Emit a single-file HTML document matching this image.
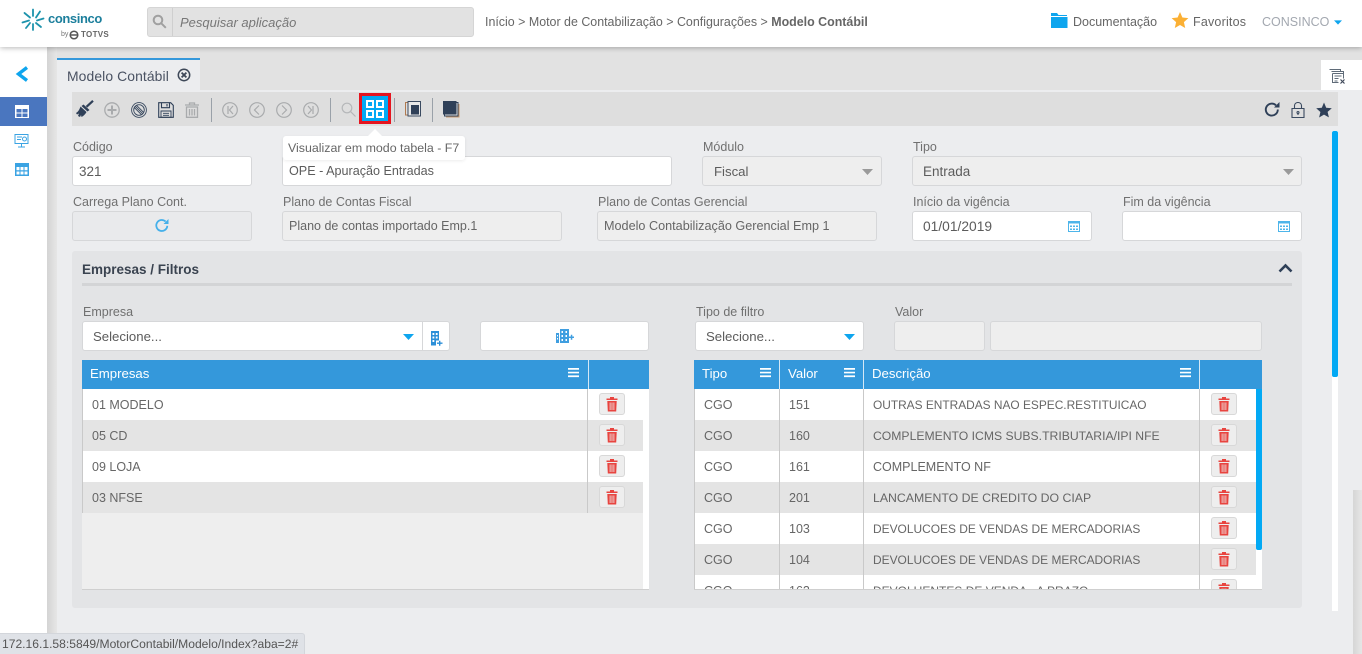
<!DOCTYPE html>
<html lang="pt"><head><meta charset="utf-8"><title>Modelo Contábil</title>
<style>
*{box-sizing:border-box}
html,body{margin:0;padding:0;width:1362px;height:654px;overflow:hidden;background:#ecedef;font-family:"Liberation Sans",sans-serif;color:#666;font-size:13px}
.a{position:absolute}
.t{position:absolute;white-space:nowrap;line-height:16px}
.lb{color:#707070;font-size:12.5px}
.in{position:absolute;height:30px;background:#fff;border:1px solid #d6d7d9;border-radius:3px;padding:0 0 0 6px;line-height:29px;font-size:13.2px;color:#5c5c5c;white-space:nowrap}
.dis{background:#eeeeee}
.h{position:absolute;background:#3498db;height:29px;top:360px}
.hd{color:#fff;font-size:13.2px}
.row{position:absolute;height:31px}
.g{background:#e4e4e4}.w{background:#fff}
.cell{position:absolute;font-size:12.5px;color:#666;white-space:nowrap;line-height:16px}
.btn{position:absolute;width:26px;height:22px;background:#eeeeee;border:1px solid #d8d8d8;border-radius:3px}
.btn svg{position:absolute;left:5px;top:2px}
.v{position:absolute;width:1px;background:#c9c9c9}
.ic{position:absolute;top:100px}
.sep{position:absolute;top:98px;height:24px;width:1px;background:#9aa1a9}
</style></head><body>
<svg width="0" height="0" style="position:absolute">
<symbol id="tr" viewBox="0 0 14 16"><path d="M1.500 2.500h11v1.500h-11zM5 1h4v2H5z" fill="#e8443f"/><path d="M2.300 5h9.400l-.5 10.500H2.800zM4.700 6.500v7.500h.8V6.500zM6.600 6.500v7.500h.8V6.500zM8.500 6.500v7.500h.8V6.500z" fill="#e8443f" fill-rule="evenodd"/></symbol>
<symbol id="mn" viewBox="0 0 11 11"><path d="M0 1h11v1.700H0zM0 4.700h11v1.700H0zM0 8.400h11v1.700H0z" fill="#fff"/></symbol>
<symbol id="cal" viewBox="0 0 14 14"><path d="M1.500 2.500h11v10h-11z" fill="none" stroke="#4db5ea"/><path d="M1 2h12v2.500H1z" fill="#4db5ea"/><path d="M3 6.500h2v1.500H3zM6 6.500h2v1.500H6zM9 6.500h2v1.500H9zM3 9.500h2v1.500H3zM6 9.500h2v1.500H6zM9 9.500h2v1.500H9z" fill="#4db5ea"/></symbol>
<symbol id="cr" viewBox="0 0 11 6"><path d="M0 0h11L5.500 6z" fill="#0ea5ee"/></symbol>
</svg>

<!-- header -->
<div class="a" style="left:0;top:0;width:1362px;height:47px;background:#fff;box-shadow:0 1px 5px rgba(0,0,0,.28);z-index:5">
<svg class="a" style="left:21px;top:8px" width="24" height="24" viewBox="0 0 24 24" fill="none" stroke="#1d93ac" stroke-width="1.800" stroke-linecap="round"><path d="M12 8V1.500M15 9.500l4-6M16 12.500l6.500-2M15 15l5 4M12 16v6M9 15l-4 5M8 12.500l-6.500 2M9 9.500L3.500 5"/></svg>
<span class="t" style="left:48px;top:11px;font-size:13px;font-weight:bold;color:#1c7f9c;letter-spacing:-.4px">consinco</span>
<span class="t" style="left:61px;top:27px;font-size:7px;color:#777">by</span>
<svg class="a" style="left:69px;top:30px" width="10" height="10" viewBox="0 0 10 10" fill="none" stroke="#555" stroke-width="1.500"><circle cx="5" cy="5" r="3.800"/><path d="M2 5h6"/></svg>
<span class="t" style="left:81px;top:27px;font-size:8px;font-weight:bold;color:#666;letter-spacing:.3px">TOTVS</span>

<div class="a" style="left:147px;top:7px;width:327px;height:30px;background:#e2e2e2;border:1px solid #d5d5d5;border-radius:3px"></div>
<div class="a" style="left:172px;top:8px;width:1px;height:28px;background:#cfcfcf"></div>
<svg class="a" style="left:152px;top:14px" width="15" height="15" viewBox="0 0 15 15" fill="none" stroke="#a0a0a0" stroke-width="2"><circle cx="6" cy="6" r="4.300"/><path d="M9.300 9.300l4.500 4.500"/></svg>
<span class="t" style="left:180px;top:15px;font-size:13px;font-style:italic;color:#777">Pesquisar aplicação</span>

<span class="t" style="left:485px;top:14px;font-size:12.430px;color:#666">Início &gt; Motor de Contabilização &gt; Configurações &gt; <b>Modelo Contábil</b></span>

<svg class="a" style="left:1051px;top:13px" width="17" height="15" viewBox="0 0 17 15"><path d="M0 0h6l1.500 2H16v1H0z" fill="#0ea5ee"/><path d="M0 4h16.500v11H0z" fill="#0ea5ee"/></svg>
<span class="t" style="left:1073px;top:14px;font-size:12.500px;color:#666">Documentação</span>
<svg class="a" style="left:1171px;top:11px" width="18" height="18" viewBox="0 0 18 18"><path d="M9 1l2.400 5.500 6 .6-4.500 4 1.300 5.900L9 14l-5.200 3 1.300-5.900-4.500-4 6-.6z" fill="#fbb034"/></svg>
<span class="t" style="left:1193px;top:14px;font-size:12.500px;color:#666;letter-spacing:.2px">Favoritos</span>
<span class="t" style="left:1262px;top:14px;font-size:12.500px;color:#a3a8b0">CONSINCO</span>
<svg class="a" style="left:1334px;top:20px" width="8" height="5"><use href="#cr"/></svg>
</div>

<!-- sidebar -->
<div class="a" style="left:0;top:47px;width:47px;height:607px;background:#fff"></div>
<div class="a" style="left:47px;top:47px;width:10px;height:607px;background:linear-gradient(90deg,#d4d4d4,#e6e6e6)"></div>
<svg class="a" style="left:15px;top:66px" width="14" height="16" viewBox="0 0 14 16"><path d="M12 1.500L3.500 8l8.500 6.500" fill="none" stroke="#0ea5ee" stroke-width="3.400"/></svg>
<div class="a" style="left:0;top:97px;width:47px;height:29px;background:#4a76bf"></div>
<svg class="a" style="left:15px;top:104px" width="14" height="14" viewBox="0 0 14 14"><path d="M0 1h14v13H0z" fill="#fff"/><path d="M1.500 5h5v3.500h-5zM7.500 5h5v3.500h-5zM1.500 9.500h5V13h-5zM7.500 9.500h5V13h-5z" fill="#4a76bf"/></svg>
<svg class="a" style="left:14px;top:133px" width="15" height="15" viewBox="0 0 15 15" fill="none" stroke="#3aa3e3"><path d="M1 1.500h13v9H1zM7.500 10.500v3M4 14h7M3 4h5M3 6.500h4"/><circle cx="10.500" cy="6" r="2"/></svg>
<svg class="a" style="left:15px;top:162px" width="14" height="14" viewBox="0 0 14 14"><path d="M0 1h14v13H0z" fill="#3aa3e3"/><path d="M1.500 5h3v3.200h-3zM5.500 5h3v3.200h-3zM9.500 5h3v3.200h-3zM1.500 9.500h3v3h-3zM5.500 9.500h3v3h-3zM9.500 9.500h3v3h-3z" fill="#fff"/></svg>

<!-- tab band -->
<div class="a" style="left:57px;top:47px;width:1305px;height:43px;background:#e2e2e2"></div>
<div class="a" style="left:57px;top:58px;width:143px;height:32px;background:#ecedef;border-top:2px solid #3498db"></div>
<span class="t" style="left:67px;top:68px;font-size:13.900px;color:#4a5262;letter-spacing:.1px">Modelo Contábil</span>
<svg class="a" style="left:177px;top:68px" width="14" height="14" viewBox="0 0 14 14" fill="none" stroke="#3e4858" stroke-width="1.500"><circle cx="7" cy="7" r="5.700"/><path d="M4.600 4.600l4.800 4.800M9.400 4.600l-4.800 4.800" stroke-width="1.800"/></svg>
<div class="a" style="left:1321px;top:60px;width:41px;height:30px;background:#fff"></div>
<svg class="a" style="left:1329px;top:68px" width="17" height="16" viewBox="0 0 17 16" fill="none" stroke="#5f6b78"><path d="M.5 1.500h11v2M2.500 3.500h12v2"/><path d="M3.500 5.500h11v5M3.500 5.500v9h6M5.500 8h7M5.500 10.500h4M5.500 13h3"/><path d="M11.500 11.500l4 4M15.500 11.500l-4 4" stroke="#3e4858" stroke-width="1.200"/></svg>

<!-- toolbar -->
<div class="a" style="left:72px;top:92px;width:1266px;height:34px;background:#dedede"></div>
<svg class="ic" style="left:76px" width="18" height="18" viewBox="0 0 18 18"><path d="M17 .8l-6.500 6" stroke="#2f4058" stroke-width="2.200"/><path d="M7.500 4.500l6 5.500-2 1.500-6-5.500z" fill="#2f4058"/><path d="M4.500 6.500l6 5.500c-1 2-3 4-5 5l-.5-2-1 2-2-1 1-2.500-2 1-1-1.500c2-1 3.500-3.500 4.500-6.500z" fill="#2f4058"/></svg>
<svg class="ic" style="left:104px;top:102px" width="16" height="16" viewBox="0 0 16 16" fill="none" stroke="#a9abad" stroke-width="1.300"><circle cx="8" cy="8" r="7.200"/><path d="M8 3.500v9M3.500 8h9" stroke-width="2"/></svg>
<svg class="ic" style="left:131px;top:102px" width="16" height="16" viewBox="0 0 16 16" fill="none" stroke="#3a4a60" stroke-width=".9"><circle cx="8" cy="8" r="7.400"/><circle cx="8" cy="8" r="5.300"/><path d="M4.300 4.300l7.400 7.400M5.500 3.300l7.200 7.200M3.300 5.500l7.200 7.200"/></svg>
<svg class="ic" style="left:158px;top:102px" width="16" height="16" viewBox="0 0 16 16" fill="none" stroke="#2f4058" stroke-width="1.100"><path d="M.7.700h12l2.600 2.600v12H.7z"/><path d="M3.500.7v5h8v-5M9 2v2.500"/><path d="M3 9h10v6.300H3zM5 11.300h6M5 13.300h6" stroke-width=".9"/></svg>
<svg class="ic" style="left:184px;top:102px" width="16" height="16" viewBox="0 0 16 16" fill="none" stroke="#a9abad" stroke-width="1.300"><path d="M1 3h14M5.500 3V1h5v2M2.500 5h11v10.300h-11zM5.500 7v6.500M8 7v6.500M10.500 7v6.500"/></svg>
<div class="sep" style="left:211px"></div>
<svg class="ic" style="left:222px;top:102px" width="16" height="16" viewBox="0 0 16 16" fill="none" stroke="#a9abad" stroke-width="1.200"><circle cx="8" cy="8" r="7.300"/><path d="M6 4v8M11 4L7.500 8l3.500 4"/></svg>
<svg class="ic" style="left:249px;top:102px" width="16" height="16" viewBox="0 0 16 16" fill="none" stroke="#a9abad" stroke-width="1.200"><circle cx="8" cy="8" r="7.300"/><path d="M10 3.500L5.500 8l4.500 4.500"/></svg>
<svg class="ic" style="left:276px;top:102px" width="16" height="16" viewBox="0 0 16 16" fill="none" stroke="#a9abad" stroke-width="1.200"><circle cx="8" cy="8" r="7.300"/><path d="M6 3.500L10.500 8 6 12.500"/></svg>
<svg class="ic" style="left:303px;top:102px" width="16" height="16" viewBox="0 0 16 16" fill="none" stroke="#a9abad" stroke-width="1.200"><circle cx="8" cy="8" r="7.300"/><path d="M10 4v8M5 4l3.500 4L5 12"/></svg>
<div class="sep" style="left:330px"></div>
<svg class="ic" style="left:341px;top:102px" width="15" height="15" viewBox="0 0 15 15" fill="none" stroke="#b5b7b9" stroke-width="1.200"><circle cx="6" cy="6" r="4.800"/><path d="M9.500 9.500l5 5"/></svg>
<div class="a" style="left:359px;top:93px;width:32px;height:31px;background:#03a9f4;border:3px solid #e5141f"></div>
<svg class="a" style="left:366px;top:100px" width="18" height="18" viewBox="0 0 18 18" fill="none" stroke="#fff" stroke-width="2"><path d="M1 1h6v6H1zM11 1h6v6h-6zM1 11h6v6H1zM11 11h6v6h-6z"/></svg>
<div class="sep" style="left:394px"></div>
<svg class="ic" style="left:405px;top:101px" width="17" height="16" viewBox="0 0 17 16"><path d="M.5 1.500h11v12.500H.5z" fill="#dedede" stroke="#b07a50"/><path d="M3 .5h12.500v14.500H3z" fill="#e8e8e8" stroke="#3a4a60"/><path d="M6 4h8v9.500H6z" fill="#2f4058"/></svg>
<div class="sep" style="left:432px"></div>
<svg class="ic" style="left:443px;top:101px" width="17" height="17" viewBox="0 0 17 17"><path d="M3 3h13.500v13.500H3z" fill="#c99b70"/><path d="M1.500 1.500H15V15H1.500z" fill="#dedede" stroke="#2f4058"/><path d="M0 0h13.500v13.500H0z" fill="#2f4058"/></svg>
<svg class="ic" style="left:1264px;top:102px" width="16" height="16" viewBox="0 0 16 16" fill="none" stroke="#2f4058" stroke-width="1.900"><path d="M13.800 7.500a6 6 0 1 1-1.800-4.200"/><path d="M15.500 0v5.500H10z" fill="#2f4058" stroke="none"/></svg>
<svg class="ic" style="left:1291px;top:102px" width="14" height="16" viewBox="0 0 14 16" fill="none" stroke="#3a4a60" stroke-width="1.100"><path d="M3.500 6.500V3.500a3.500 3 0 0 1 7 0v3M1 6.500h12v9H1z"/><circle cx="7" cy="10.500" r="1"/><path d="M7 11.500v1.500"/></svg>
<svg class="ic" style="left:1316px;top:102px" width="16" height="16" viewBox="0 0 16 16"><path d="M8 .5l2.200 5.200 5.600.5-4.200 3.700 1.300 5.500L8 12.600l-4.900 2.900 1.300-5.500L.2 6.200l5.600-.5z" fill="#2f4058"/></svg>

<!-- scrollbar -->
<div class="a" style="left:1332px;top:131px;width:6px;height:480px;background:#fff"></div>
<div class="a" style="left:1332px;top:131px;width:6px;height:246px;background:#03a9f4;border-radius:2px"></div>
<div class="a" style="left:1353px;top:490px;width:9px;height:164px;background:linear-gradient(90deg,#d6d6d6,#e6e6e6)"></div>

<!-- row 1 -->
<span class="t lb" style="left:73px;top:139px">Código</span>
<div class="in" style="left:72px;top:156px;width:180px;padding-left:6px;font-size:13.5px">321</div>
<div class="in" style="left:282px;top:156px;width:390px;font-size:12.600px">OPE - Apuração Entradas</div>
<span class="t lb" style="left:703px;top:139px">Módulo</span>
<div class="in dis" style="left:702px;top:156px;width:180px;padding-left:11px;font-size:13.200px">Fiscal</div>
<svg class="a" style="left:862px;top:169px" width="11" height="6"><path d="M0 0h11L5.500 6z" fill="#9a9a9a"/></svg>
<span class="t lb" style="left:913px;top:139px">Tipo</span>
<div class="in dis" style="left:912px;top:156px;width:390px;padding-left:10px;font-size:13.500px">Entrada</div>
<svg class="a" style="left:1283px;top:169px" width="11" height="6"><path d="M0 0h11L5.500 6z" fill="#9a9a9a"/></svg>

<!-- tooltip -->
<div class="a" style="left:283px;top:136px;width:182px;height:24px;background:#fff;border-radius:3px;box-shadow:0 1px 3px rgba(0,0,0,.08);z-index:3"></div>
<svg class="a" style="left:367px;top:129px;z-index:3" width="16" height="8"><path d="M0 8L8 0l8 8z" fill="#fff"/></svg>
<span class="t" style="left:288px;top:140px;font-size:12.400px;color:#666;z-index:4">Visualizar em modo tabela - F7</span>

<!-- row 2 -->
<span class="t lb" style="left:73px;top:194px">Carrega Plano Cont.</span>
<div class="in" style="left:72px;top:211px;width:180px;background:#e9eaec"></div>
<svg class="a" style="left:155px;top:218px" width="14" height="15" viewBox="0 0 14 15" fill="none" stroke="#45b0ea" stroke-width="1.800"><path d="M12.300 7.800A5.500 5.500 0 1 1 10.600 3.500"/><path d="M13.500 1v5H8.500z" fill="#45b0ea" stroke="none"/></svg>
<span class="t lb" style="left:283px;top:194px">Plano de Contas Fiscal</span>
<div class="in dis" style="left:282px;top:211px;width:280px;font-size:12.500px;color:#666">Plano de contas importado Emp.1</div>
<span class="t lb" style="left:598px;top:194px">Plano de Contas Gerencial</span>
<div class="in dis" style="left:597px;top:211px;width:280px;font-size:12.650px;color:#666">Modelo Contabilização Gerencial Emp 1</div>
<span class="t lb" style="left:913px;top:194px">Início da vigência</span>
<div class="in" style="left:912px;top:211px;width:180px;padding-left:10px;font-size:13.800px">01/01/2019</div>
<svg class="a" style="left:1067px;top:219px" width="14" height="14"><use href="#cal"/></svg>
<span class="t lb" style="left:1123px;top:194px">Fim da vigência</span>
<div class="in" style="left:1122px;top:211px;width:180px"></div>
<svg class="a" style="left:1277px;top:219px" width="14" height="14"><use href="#cal"/></svg>

<!-- panel -->
<div class="a" style="left:72px;top:251px;width:1230px;height:357px;background:#e3e4e6;border-radius:3px"></div>
<span class="t" style="left:82px;top:262px;font-size:13.500px;font-weight:bold;color:#3a4350">Empresas / Filtros</span>
<div class="a" style="left:82px;top:283px;width:1210px;height:3px;background:#d3d4d6"></div>
<svg class="a" style="left:1278px;top:263px" width="15" height="10" viewBox="0 0 15 10"><path d="M1.500 8.500L7.500 2.500l6 6" fill="none" stroke="#2f4058" stroke-width="2.600"/></svg>

<span class="t lb" style="left:83px;top:304px">Empresa</span>
<div class="in" style="left:82px;top:321px;width:341px;padding-left:10px;border-radius:3px 0 0 3px">Selecione...</div>
<svg class="a" style="left:403px;top:334px" width="11" height="6"><use href="#cr"/></svg>
<div class="in" style="left:422px;top:321px;width:28px;border-radius:0 3px 3px 0"></div>
<svg class="a" style="left:431px;top:331px" width="12" height="15" viewBox="0 0 12 15"><path d="M0 0h8v14.500H0z" fill="#2c8fd8"/><path d="M1.500 2h1.800v2H1.500zM4.800 2h1.800v2H4.800zM1.500 5.500h1.800v2H1.500zM4.800 5.500h1.800v2H4.800zM1.500 9h1.800v2H1.500z" fill="#fff"/><path d="M5 9.500h7v5.500H5z" fill="#fff"/><path d="M6 11.500h5.500v1.400H6zM8 9.800h1.400v5H8z" fill="#2c8fd8"/></svg>
<div class="in" style="left:480px;top:321px;width:169px"></div>
<svg class="a" style="left:556px;top:329px" width="18" height="14" viewBox="0 0 18 14"><path d="M0 4h3v10H0zM4 0h9v14H4z" fill="#3f9ee0"/><path d="M1 6h1v1.500H1zM1 9h1v1.500H1zM5.500 2h1.500v2H5.500zM9.500 2h1.500v2H9.500zM5.500 6h1.500v2H5.500zM9.500 6h1.500v2H9.500zM5.500 10h1.500v2H5.500zM9.500 10h1.500v2H9.500z" fill="#fff"/><path d="M13 7.500h5v1.500h-5zM14.800 5.800h1.500v5h-1.500z" fill="#3f9ee0"/></svg>

<span class="t lb" style="left:696px;top:304px">Tipo de filtro</span>
<div class="in" style="left:695px;top:321px;width:169px;padding-left:10px">Selecione...</div>
<svg class="a" style="left:844px;top:334px" width="11" height="6"><use href="#cr"/></svg>
<span class="t lb" style="left:895px;top:304px">Valor</span>
<div class="in dis" style="left:894px;top:321px;width:91px"></div>
<div class="in dis" style="left:990px;top:321px;width:272px"></div>

<!-- left grid -->
<div class="a" style="left:82px;top:389px;width:567px;height:201px;background:#eee;border-bottom:1px solid #cfcfcf"></div>
<div class="a" style="left:643px;top:389px;width:6px;height:200px;background:#fff"></div>
<div class="h" style="left:82px;width:567px"></div>
<div class="a" style="left:588px;top:360px;width:1px;height:29px;background:#d5e8f6"></div>
<span class="t hd" style="left:90px;top:366px">Empresas</span>
<svg class="a" style="left:568px;top:367px" width="11" height="11"><use href="#mn"/></svg>

<div class="row w" style="left:82px;top:389px;width:561px"></div>
<div class="row g" style="left:82px;top:420px;width:561px"></div>
<div class="row w" style="left:82px;top:451px;width:561px"></div>
<div class="row g" style="left:82px;top:482px;width:561px"></div>
<div class="v" style="left:587px;top:389px;height:124px"></div>
<div class="v" style="left:82px;top:389px;height:124px"></div>
<span class="cell" style="left:92px;top:397px">01 MODELO</span>
<span class="cell" style="left:92px;top:428px">05 CD</span>
<span class="cell" style="left:92px;top:459px">09 LOJA</span>
<span class="cell" style="left:92px;top:490px">03 NFSE</span>
<div class="btn" style="left:599px;top:393px"><svg width="14" height="16"><use href="#tr"/></svg></div>
<div class="btn" style="left:599px;top:424px"><svg width="14" height="16"><use href="#tr"/></svg></div>
<div class="btn" style="left:599px;top:455px"><svg width="14" height="16"><use href="#tr"/></svg></div>
<div class="btn" style="left:599px;top:486px"><svg width="14" height="16"><use href="#tr"/></svg></div>

<!-- right grid -->
<div class="h" style="left:694px;width:568px"></div>
<div class="a" style="left:779px;top:360px;width:1px;height:29px;background:#d5e8f6"></div>
<div class="a" style="left:863px;top:360px;width:1px;height:29px;background:#d5e8f6"></div>
<div class="a" style="left:1199px;top:360px;width:1px;height:29px;background:#d5e8f6"></div>
<span class="t hd" style="left:702px;top:366px">Tipo</span>
<svg class="a" style="left:760px;top:367px" width="11" height="11"><use href="#mn"/></svg>
<span class="t hd" style="left:788px;top:366px">Valor</span>
<svg class="a" style="left:844px;top:367px" width="11" height="11"><use href="#mn"/></svg>
<span class="t hd" style="left:872px;top:366px">Descrição</span>
<svg class="a" style="left:1180px;top:367px" width="11" height="11"><use href="#mn"/></svg>

<div class="a" style="left:694px;top:389px;width:568px;height:201px;overflow:hidden;border-bottom:1px solid #cfcfcf;background:#fff">
<div class="row w" style="left:0;top:0;width:562px"></div>
<div class="row g" style="left:0;top:31px;width:562px"></div>
<div class="row w" style="left:0;top:62px;width:562px"></div>
<div class="row g" style="left:0;top:93px;width:562px"></div>
<div class="row w" style="left:0;top:124px;width:562px"></div>
<div class="row g" style="left:0;top:155px;width:562px"></div>
<div class="row w" style="left:0;top:186px;width:562px"></div>
<div class="v" style="left:0;top:0;height:200px"></div>
<div class="v" style="left:85px;top:0;height:200px"></div>
<div class="v" style="left:169px;top:0;height:200px"></div>
<div class="v" style="left:505px;top:0;height:200px"></div>
<div class="a" style="left:562px;top:0;width:6px;height:161px;background:#03a9f4;border-radius:0 0 2px 2px"></div>

<span class="cell" style="left:10px;top:8px">CGO</span><span class="cell" style="left:95px;top:8px">151</span><span class="cell" style="left:179px;top:8px;font-size:11.900px">OUTRAS ENTRADAS NAO ESPEC.RESTITUICAO</span>
<span class="cell" style="left:10px;top:39px">CGO</span><span class="cell" style="left:95px;top:39px">160</span><span class="cell" style="left:179px;top:39px;font-size:12.200px">COMPLEMENTO ICMS SUBS.TRIBUTARIA/IPI NFE</span>
<span class="cell" style="left:10px;top:70px">CGO</span><span class="cell" style="left:95px;top:70px">161</span><span class="cell" style="left:179px;top:70px">COMPLEMENTO NF</span>
<span class="cell" style="left:10px;top:101px">CGO</span><span class="cell" style="left:95px;top:101px">201</span><span class="cell" style="left:179px;top:101px;font-size:12.300px">LANCAMENTO DE CREDITO DO CIAP</span>
<span class="cell" style="left:10px;top:132px">CGO</span><span class="cell" style="left:95px;top:132px">103</span><span class="cell" style="left:179px;top:132px;font-size:11.950px">DEVOLUCOES DE VENDAS DE MERCADORIAS</span>
<span class="cell" style="left:10px;top:163px">CGO</span><span class="cell" style="left:95px;top:163px">104</span><span class="cell" style="left:179px;top:163px;font-size:11.950px">DEVOLUCOES DE VENDAS DE MERCADORIAS</span>
<span class="cell" style="left:10px;top:194px">CGO</span><span class="cell" style="left:95px;top:194px">162</span><span class="cell" style="left:179px;top:194px;font-size:12px">DEVOLUENTES DE VENDA - A PRAZO</span>

<div class="btn" style="left:517px;top:4px"><svg width="14" height="16"><use href="#tr"/></svg></div>
<div class="btn" style="left:517px;top:35px"><svg width="14" height="16"><use href="#tr"/></svg></div>
<div class="btn" style="left:517px;top:66px"><svg width="14" height="16"><use href="#tr"/></svg></div>
<div class="btn" style="left:517px;top:97px"><svg width="14" height="16"><use href="#tr"/></svg></div>
<div class="btn" style="left:517px;top:128px"><svg width="14" height="16"><use href="#tr"/></svg></div>
<div class="btn" style="left:517px;top:159px"><svg width="14" height="16"><use href="#tr"/></svg></div>
<div class="btn" style="left:517px;top:190px"><svg width="14" height="16"><use href="#tr"/></svg></div>
</div>

<!-- status bar -->
<div class="a" style="left:0;top:633px;width:305px;height:21px;background:#dfe2e7;border:1px solid #d3d6db;border-width:1px 1px 0 0;border-radius:0 3px 0 0;z-index:6"></div>
<span class="t" style="left:2px;top:636px;font-size:12.100px;color:#555;z-index:7">172.16.1.58:5849/MotorContabil/Modelo/Index?aba=2#</span>
</body></html>
